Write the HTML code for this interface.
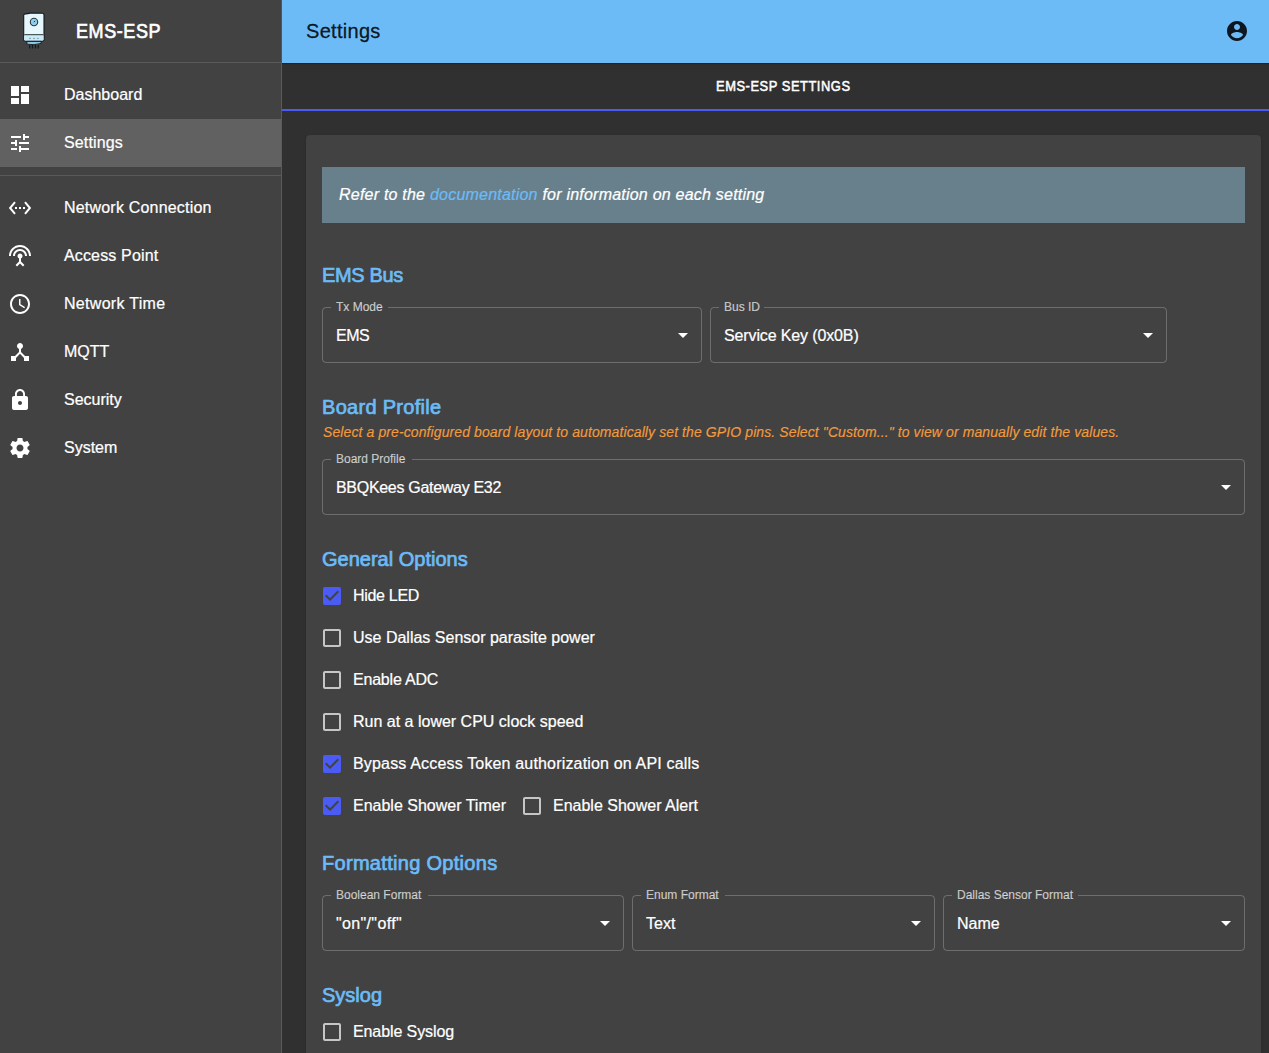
<!DOCTYPE html>
<html><head><meta charset="utf-8">
<style>
*{box-sizing:border-box;margin:0;padding:0}
html,body{width:1269px;height:1053px;overflow:hidden;background:#303030;font-family:"Liberation Sans",sans-serif;color:#fff}
.a{position:absolute;white-space:pre}
svg{position:absolute;display:block}
.t16{font-size:16px;line-height:16px;-webkit-text-stroke:0.22px currentColor}
.t20{font-size:20px;line-height:20px}
.t14{font-size:14px;line-height:14px;-webkit-text-stroke:0.15px currentColor}
.t12{font-size:12px;line-height:12px;-webkit-text-stroke:0.15px currentColor}
.med{-webkit-text-stroke:0.7px currentColor}
.h{color:#6cbbf7}
.lbl{color:rgba(255,255,255,0.7)}
.ob{position:absolute;border:1px solid rgba(255,255,255,0.23);border-radius:4px}
.notch{position:absolute;background:#424242;height:3px}
</style></head><body>

<!-- sidebar -->
<div class="a" style="left:0;top:0;width:281px;height:1053px;background:#424242"></div>
<div class="a" style="left:281px;top:0;width:1px;height:1053px;background:#5a5a5a"></div>
<div class="a" style="left:0;top:62px;width:281px;height:1px;background:#5a5a5a"></div>
<div class="a" style="left:0;top:119px;width:281px;height:48px;background:#616161"></div>
<div class="a" style="left:0;top:175px;width:281px;height:1px;background:#5a5a5a"></div>

<!-- logo -->
<svg style="left:18px;top:10px" width="32" height="42" viewBox="0 0 32 42">
  <path d="M5.7 5 Q5.8 4 7.5 3.9 Q10 3.6 12 3.1 L24.8 3.3 Q26 3.6 26 5 L26 29.8 Q26 31 24.6 31 L7.2 31 Q5.7 31 5.7 29.8 Z" fill="#e6f7fd" stroke="#15191b" stroke-width="1.1"/>
  <rect x="6.2" y="24" width="19.3" height="1.5" fill="#50575a"/>
  <path d="M6.2 25.5 H25.5 V29.8 Q25.5 30.5 24.6 30.5 H7.2 Q6.2 30.5 6.2 29.8 Z" fill="#c9ebfa"/>
  <circle cx="16" cy="12" r="3.7" fill="#8fcfee" stroke="#2e363a" stroke-width="1.1"/>
  <path d="M15.9 12.2 L17.1 10.9" stroke="#1a1f22" stroke-width="0.9"/>
  <rect x="11" y="27.9" width="2" height="0.9" fill="#7898a6"/><rect x="15" y="27.9" width="2" height="0.9" fill="#7898a6"/><rect x="18.8" y="27.9" width="2" height="0.9" fill="#7898a6"/>
  <path d="M8.9 31.4 L23.1 31.4 L23.1 33.4 Q16 35.6 8.9 34.2 Z" fill="#8cc6e2" stroke="#15191b" stroke-width="0.9"/>
  <path d="M11.7 35 V38.6 M14.5 35 V38.6 M17.5 35 V38.6 M20.2 35 V38.6" stroke="#15191b" stroke-width="1.15"/>
</svg>
<div class="a t20 med" style="left:76px;top:21px;letter-spacing:0.65px;transform:scaleX(0.9);transform-origin:0 0">EMS-ESP</div>

<!-- nav icons -->
<svg style="left:8px;top:83px" width="24" height="24" viewBox="0 0 24 24"><path fill="#fff" d="M3 13h8V3H3v10zm0 8h8v-6H3v6zm10 0h8V11h-8v10zm0-18v6h8V3h-8z"/></svg>
<div class="a t16" style="left:64px;top:87px">Dashboard</div>
<svg style="left:8px;top:131px" width="24" height="24" viewBox="0 0 24 24"><path fill="#fff" d="M3 17v2h6v-2H3zM3 5v2h10V5H3zm10 16v-2h8v-2h-8v-2h-2v6h2zM7 9v2H3v2h4v2h2V9H7zm14 4v-2H11v2h10zm-6-4h2V7h4V5h-4V3h-2v6z"/></svg>
<div class="a t16" style="left:64px;top:135px;letter-spacing:0.15px">Settings</div>

<svg style="left:8px;top:196px" width="24" height="24" viewBox="0 0 24 24"><path fill="#fff" d="M7.77 6.76L6.23 5.48.82 12l5.41 6.52 1.54-1.28L3.42 12l4.35-5.24zM7 13h2v-2H7v2zm10-2h-2v2h2v-2zm-6 2h2v-2h-2v2zm6.77-7.52l-1.54 1.28L20.58 12l-4.35 5.24 1.54 1.28L23.18 12l-5.41-6.52z"/></svg>
<div class="a t16" style="left:64px;top:200px;letter-spacing:0.2px">Network Connection</div>
<svg style="left:8px;top:244px" width="24" height="24" viewBox="0 0 24 24"><path fill="#fff" d="M12 5c-3.87 0-7 3.13-7 7h2c0-2.76 2.24-5 5-5s5 2.24 5 5h2c0-3.87-3.13-7-7-7zm1 9.29c.88-.39 1.5-1.26 1.5-2.29 0-1.38-1.12-2.5-2.5-2.5S9.5 10.62 9.5 12c0 1.02.62 1.9 1.5 2.29v3.3L7.59 21 9 22.41l3-3 3 3L16.41 21 13 17.59v-3.3zM12 1C5.93 1 1 5.93 1 12h2c0-4.97 4.03-9 9-9s9 4.03 9 9h2c0-6.07-4.93-11-11-11z"/></svg>
<div class="a t16" style="left:64px;top:248px;letter-spacing:0.15px">Access Point</div>
<svg style="left:8px;top:292px" width="24" height="24" viewBox="0 0 24 24"><path fill="#fff" d="M11.99 2C6.47 2 2 6.48 2 12s4.47 10 9.99 10C17.52 22 22 17.52 22 12S17.52 2 11.99 2zM12 20c-4.42 0-8-3.58-8-8s3.58-8 8-8 8 3.58 8 8-3.58 8-8 8zm.5-13H11v6l5.25 3.15.75-1.23-4.5-2.67z"/></svg>
<div class="a t16" style="left:64px;top:296px;letter-spacing:0.3px">Network Time</div>
<svg style="left:8px;top:340px" width="24" height="24" viewBox="0 0 24 24"><path fill="#fff" d="M17 16l-4-4V8.82C14.16 8.4 15 7.3 15 6c0-1.66-1.34-3-3-3S9 4.34 9 6c0 1.3.84 2.4 2 2.82V12l-4 4H3v5h5v-3.05l4-4.2 4 4.2V21h5v-5h-4z"/></svg>
<div class="a t16" style="left:64px;top:344px">MQTT</div>
<svg style="left:8px;top:388px" width="24" height="24" viewBox="0 0 24 24"><path fill="#fff" d="M18 8h-1V6c0-2.76-2.24-5-5-5S7 3.24 7 6v2H6c-1.1 0-2 .9-2 2v10c0 1.1.9 2 2 2h12c1.1 0 2-.9 2-2V10c0-1.1-.9-2-2-2zm-6 9c-1.1 0-2-.9-2-2s.9-2 2-2 2 .9 2 2-.9 2-2 2zm3.1-9H8.9V6c0-1.71 1.39-3.1 3.1-3.1 1.71 0 3.1 1.39 3.1 3.1v2z"/></svg>
<div class="a t16" style="left:64px;top:392px">Security</div>
<svg style="left:8px;top:436px" width="24" height="24" viewBox="0 0 24 24"><path fill="#fff" d="M19.43 12.98c.04-.32.07-.64.07-.98s-.03-.66-.07-.98l2.11-1.65c.19-.15.24-.42.12-.64l-2-3.46c-.12-.22-.39-.3-.61-.22l-2.49 1c-.52-.4-1.08-.73-1.69-.98l-.38-2.65C14.46 2.18 14.25 2 14 2h-4c-.25 0-.46.18-.49.42l-.38 2.65c-.61.25-1.17.59-1.69.98l-2.49-1c-.23-.09-.49 0-.61.22l-2 3.46c-.13.22-.07.49.12.64l2.11 1.65c-.04.32-.07.65-.07.98s.03.66.07.98l-2.11 1.65c-.19.15-.24.42-.12.64l2 3.46c.12.22.39.3.61.22l2.49-1c.52.4 1.08.73 1.69.98l.38 2.65c.03.24.24.42.49.42h4c.25 0 .46-.18.49-.42l.38-2.65c.61-.25 1.17-.59 1.69-.98l2.49 1c.23.09.49 0 .61-.22l2-3.46c.12-.22.07-.49-.12-.64l-2.11-1.65zM12 15.5c-1.93 0-3.5-1.57-3.5-3.5s1.57-3.5 3.5-3.5 3.5 1.57 3.5 3.5-1.57 3.5-3.5 3.5z"/></svg>
<div class="a t16" style="left:64px;top:440px">System</div>

<!-- header -->
<div class="a" style="left:282px;top:0;width:987px;height:63px;background:#6cbbf7;box-shadow:0 1px 1px rgba(0,0,0,0.3)"></div>
<div class="a t20" style="left:306px;top:21px;color:rgba(0,0,0,0.87);letter-spacing:0.3px;-webkit-text-stroke:0.3px rgba(0,0,0,0.87)">Settings</div>
<svg style="left:1225px;top:19px" width="24" height="24" viewBox="0 0 24 24"><path fill="#0e171f" d="M12 2C6.48 2 2 6.48 2 12s4.48 10 10 10 10-4.48 10-10S17.52 2 12 2zm0 3c1.66 0 3 1.34 3 3s-1.34 3-3 3-3-1.34-3-3 1.34-3 3-3zm0 14.2c-2.5 0-4.71-1.28-6-3.22.03-1.99 4-3.08 6-3.08 1.99 0 5.97 1.09 6 3.08-1.29 1.94-3.5 3.22-6 3.22z"/></svg>

<!-- tabs -->
<div class="a t14" style="left:716px;top:79px;-webkit-text-stroke:0.5px #fff;letter-spacing:0.6px;transform:scaleX(0.92);transform-origin:0 0">EMS-ESP SETTINGS</div>
<div class="a" style="left:282px;top:109px;width:987px;height:2px;background:#4b5cf5"></div>

<!-- paper -->
<div class="a" style="left:306px;top:135px;width:955px;height:1000px;background:#424242;border-radius:4px;box-shadow:0 2px 1px -1px rgba(0,0,0,0.2),0 1px 1px 0 rgba(0,0,0,0.14),0 1px 3px 0 rgba(0,0,0,0.12)"></div>

<!-- alert -->
<div class="a" style="left:322px;top:167px;width:923px;height:56px;background:#68808c"></div>
<div class="a t16" style="left:339px;top:187px;font-style:italic;letter-spacing:0.22px">Refer to the <span style="color:#6cbbf7">documentation</span> for information on each setting</div>

<!-- EMS Bus -->
<div class="a t20 med h" style="left:322px;top:265px;letter-spacing:-0.35px">EMS Bus</div>
<div class="ob" style="left:322px;top:307px;width:380px;height:56px"></div>
<div class="notch" style="left:331px;top:306px;width:57px"></div>
<div class="a t12 lbl" style="left:336px;top:301px">Tx Mode</div>
<div class="a t16" style="left:336px;top:328px;letter-spacing:-0.5px">EMS</div>
<svg style="left:671px;top:323px" width="24" height="24" viewBox="0 0 24 24"><path fill="#fff" d="M7 10l5 5 5-5z"/></svg>
<div class="ob" style="left:710px;top:307px;width:457px;height:56px"></div>
<div class="notch" style="left:719px;top:306px;width:45px"></div>
<div class="a t12 lbl" style="left:724px;top:301px">Bus ID</div>
<div class="a t16" style="left:724px;top:328px;letter-spacing:-0.13px">Service Key (0x0B)</div>
<svg style="left:1136px;top:323px" width="24" height="24" viewBox="0 0 24 24"><path fill="#fff" d="M7 10l5 5 5-5z"/></svg>
<div class="a t20 med h" style="left:322px;top:397px;letter-spacing:0.3px">Board Profile</div>
<div class="a t14" style="left:323px;top:425px;font-style:italic;color:#f39a3c;letter-spacing:0.1px">Select a pre-configured board layout to automatically set the GPIO pins. Select "Custom..." to view or manually edit the values.</div>
<div class="ob" style="left:322px;top:459px;width:923px;height:56px"></div>
<div class="notch" style="left:331px;top:458px;width:81px"></div>
<div class="a t12 lbl" style="left:336px;top:453px">Board Profile</div>
<div class="a t16" style="left:336px;top:480px;letter-spacing:-0.3px">BBQKees Gateway E32</div>
<svg style="left:1214px;top:475px" width="24" height="24" viewBox="0 0 24 24"><path fill="#fff" d="M7 10l5 5 5-5z"/></svg>
<div class="a t20 med h" style="left:322px;top:549px">General Options</div>
<svg style="left:320px;top:584px" width="24" height="24" viewBox="0 0 24 24"><path fill="#4b5cf5" d="M19 3H5c-1.11 0-2 .9-2 2v14c0 1.1.89 2 2 2h14c1.11 0 2-.9 2-2V5c0-1.1-.89-2-2-2zm-9 14l-5-5 1.41-1.41L10 14.17l7.59-7.59L19 8l-9 9z"/></svg>
<div class="a t16" style="left:353px;top:588px;letter-spacing:-0.3px">Hide LED</div>
<svg style="left:320px;top:626px" width="24" height="24" viewBox="0 0 24 24"><path fill="rgba(255,255,255,0.7)" d="M19 5v14H5V5h14m0-2H5c-1.1 0-2 .9-2 2v14c0 1.1.9 2 2 2h14c1.1 0 2-.9 2-2V5c0-1.1-.9-2-2-2z"/></svg>
<div class="a t16" style="left:353px;top:630px">Use Dallas Sensor parasite power</div>
<svg style="left:320px;top:668px" width="24" height="24" viewBox="0 0 24 24"><path fill="rgba(255,255,255,0.7)" d="M19 5v14H5V5h14m0-2H5c-1.1 0-2 .9-2 2v14c0 1.1.9 2 2 2h14c1.1 0 2-.9 2-2V5c0-1.1-.9-2-2-2z"/></svg>
<div class="a t16" style="left:353px;top:672px;letter-spacing:-0.2px">Enable ADC</div>
<svg style="left:320px;top:710px" width="24" height="24" viewBox="0 0 24 24"><path fill="rgba(255,255,255,0.7)" d="M19 5v14H5V5h14m0-2H5c-1.1 0-2 .9-2 2v14c0 1.1.9 2 2 2h14c1.1 0 2-.9 2-2V5c0-1.1-.9-2-2-2z"/></svg>
<div class="a t16" style="left:353px;top:714px">Run at a lower CPU clock speed</div>
<svg style="left:320px;top:752px" width="24" height="24" viewBox="0 0 24 24"><path fill="#4b5cf5" d="M19 3H5c-1.11 0-2 .9-2 2v14c0 1.1.89 2 2 2h14c1.11 0 2-.9 2-2V5c0-1.1-.89-2-2-2zm-9 14l-5-5 1.41-1.41L10 14.17l7.59-7.59L19 8l-9 9z"/></svg>
<div class="a t16" style="left:353px;top:756px;letter-spacing:0.17px">Bypass Access Token authorization on API calls</div>
<svg style="left:320px;top:794px" width="24" height="24" viewBox="0 0 24 24"><path fill="#4b5cf5" d="M19 3H5c-1.11 0-2 .9-2 2v14c0 1.1.89 2 2 2h14c1.11 0 2-.9 2-2V5c0-1.1-.89-2-2-2zm-9 14l-5-5 1.41-1.41L10 14.17l7.59-7.59L19 8l-9 9z"/></svg>
<div class="a t16" style="left:353px;top:798px">Enable Shower Timer</div>
<svg style="left:520px;top:794px" width="24" height="24" viewBox="0 0 24 24"><path fill="rgba(255,255,255,0.7)" d="M19 5v14H5V5h14m0-2H5c-1.1 0-2 .9-2 2v14c0 1.1.9 2 2 2h14c1.1 0 2-.9 2-2V5c0-1.1-.9-2-2-2z"/></svg>
<div class="a t16" style="left:553px;top:798px">Enable Shower Alert</div>
<div class="a t20 med h" style="left:322px;top:853px;letter-spacing:0.3px">Formatting Options</div>
<div class="ob" style="left:322px;top:895px;width:302px;height:56px"></div>
<div class="notch" style="left:331px;top:894px;width:97px"></div>
<div class="a t12 lbl" style="left:336px;top:889px">Boolean Format</div>
<div class="a t16" style="left:336px;top:916px;letter-spacing:0.35px">"on"/"off"</div>
<svg style="left:593px;top:911px" width="24" height="24" viewBox="0 0 24 24"><path fill="#fff" d="M7 10l5 5 5-5z"/></svg>
<div class="ob" style="left:632px;top:895px;width:303px;height:56px"></div>
<div class="notch" style="left:641px;top:894px;width:84px"></div>
<div class="a t12 lbl" style="left:646px;top:889px">Enum Format</div>
<div class="a t16" style="left:646px;top:916px">Text</div>
<svg style="left:904px;top:911px" width="24" height="24" viewBox="0 0 24 24"><path fill="#fff" d="M7 10l5 5 5-5z"/></svg>
<div class="ob" style="left:943px;top:895px;width:302px;height:56px"></div>
<div class="notch" style="left:952px;top:894px;width:126px"></div>
<div class="a t12 lbl" style="left:957px;top:889px">Dallas Sensor Format</div>
<div class="a t16" style="left:957px;top:916px">Name</div>
<svg style="left:1214px;top:911px" width="24" height="24" viewBox="0 0 24 24"><path fill="#fff" d="M7 10l5 5 5-5z"/></svg>
<div class="a t20 med h" style="left:322px;top:985px">Syslog</div>
<svg style="left:320px;top:1020px" width="24" height="24" viewBox="0 0 24 24"><path fill="rgba(255,255,255,0.7)" d="M19 5v14H5V5h14m0-2H5c-1.1 0-2 .9-2 2v14c0 1.1.9 2 2 2h14c1.1 0 2-.9 2-2V5c0-1.1-.9-2-2-2z"/></svg>
<div class="a t16" style="left:353px;top:1024px;letter-spacing:-0.1px">Enable Syslog</div>
</body></html>
